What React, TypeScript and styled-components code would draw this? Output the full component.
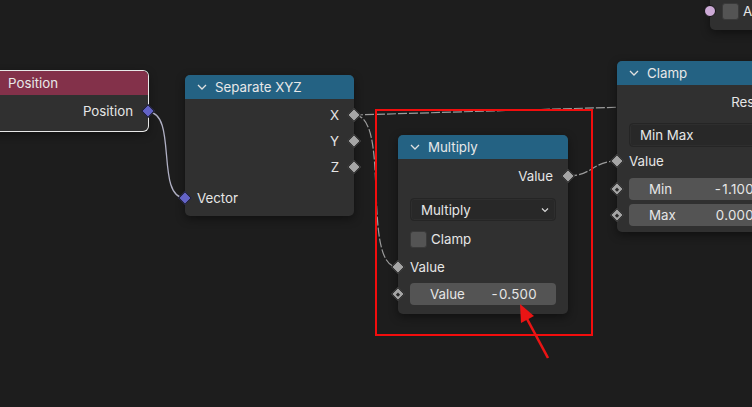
import React from "react";
import styled, { createGlobalStyle, css } from "styled-components";

const Global = createGlobalStyle`
  html, body { margin: 0; padding: 0; background: #1d1d1d; }
  body { font-family: Inter, "Noto Sans", "DejaVu Sans", sans-serif; overflow: hidden; }
`;

const Canvas = styled.div`
  position: relative;
  width: 752px;
  height: 407px;
  overflow: hidden;
  background: #1d1d1d;
`;

const Layer = styled.svg`
  position: absolute;
  left: 0;
  top: 0;
  pointer-events: none;
`;

const NodeBox = styled.div<{ $x: number; $y: number; $w: number; $selected?: boolean }>`
  position: absolute;
  left: ${(p) => p.$x}px;
  top: ${(p) => p.$y}px;
  width: ${(p) => p.$w}px;
  background: #303030;
  border-radius: 5px;
  box-shadow: ${(p) =>
    p.$selected
      ? "0 0 0 1px #e8e8e8, 0 3px 10px rgba(0,0,0,0.45)"
      : "0 3px 10px rgba(0,0,0,0.45)"};
  display: flex;
  flex-direction: column;
  color: #e6e6e6;
  font-size: 13.3px;
`;

const Header = styled.div<{ $color: string }>`
  height: 24px;
  background: ${(p) => p.$color};
  border-radius: 5px 5px 0 0;
  display: flex;
  align-items: center;
  gap: 8px;
  padding-left: 12px;
  color: #e8e8e8;
  white-space: nowrap;
`;

const Body = styled.div<{ $pt: number; $pb: number }>`
  display: flex;
  flex-direction: column;
  padding: ${(p) => p.$pt}px 0 ${(p) => p.$pb}px 0;
`;

const Row = styled.div<{ $h: number; $mt?: number; $out?: boolean }>`
  position: relative;
  height: ${(p) => p.$h}px;
  margin-top: ${(p) => p.$mt ?? 0}px;
  display: flex;
  align-items: center;
  justify-content: ${(p) => (p.$out ? "flex-end" : "flex-start")};
  padding: ${(p) => (p.$out ? "0 15px 0 0" : "0 0 0 12px")};
  white-space: nowrap;
`;

const Socket = styled.span<{ $side: "left" | "right"; $color?: string; $dot?: boolean }>`
  position: absolute;
  top: 50%;
  ${(p) => (p.$side === "left" ? "left: -5px;" : "right: -5px;")}
  width: 10px;
  height: 10px;
  margin-top: -5px;
  background: ${(p) => p.$color ?? "#a5a5a5"};
  border: 0.5px solid #111;
  transform: rotate(45deg);
  box-sizing: border-box;
  ${(p) =>
    p.$dot &&
    css`
      &::after {
        content: "";
        position: absolute;
        left: 3px;
        top: 3px;
        width: 3px;
        height: 3px;
        background: #2a2a2a;
      }
    `}
`;

const RoundSocket = styled.span`
  position: absolute;
  left: -18px;
  top: 50%;
  margin-top: -6px;
  width: 12px;
  height: 12px;
  border-radius: 50%;
  background: #ccaad6;
  border: 0.5px solid #111;
  box-sizing: border-box;
`;

const Dropdown = styled.div<{ $mt: number; $h: number }>`
  margin: ${(p) => p.$mt}px 12px 0 12px;
  height: ${(p) => p.$h}px;
  background: #282828;
  border: 1px solid #252525;
  box-shadow: inset 0 0 0 1px #2e2e2e;
  border-radius: 4px;
  box-sizing: border-box;
  display: flex;
  align-items: center;
  justify-content: space-between;
  padding: 0 6px 0 10px;
  white-space: nowrap;
`;

const CheckRow = styled.div<{ $mt: number }>`
  margin: ${(p) => p.$mt}px 12px 0 12px;
  height: 20px;
  display: flex;
  align-items: center;
  gap: 4px;
  position: relative;
  white-space: nowrap;
`;

const CheckBox = styled.span`
  width: 17px;
  height: 17px;
  border-radius: 3px;
  background: #545454;
  box-sizing: border-box;
  border: 1px solid #3a3a3a;
`;

const Field = styled.div<{ $mt: number }>`
  position: relative;
  margin: ${(p) => p.$mt}px 12px 0 12px;
  height: 22px;
  background: #545454;
  border-radius: 4px;
  display: flex;
  align-items: center;
  justify-content: space-between;
  padding: 0 19px 0 20px;
  white-space: nowrap;
`;

const FieldSocket = styled(Socket)`
  left: -17px;
`;

const Num = styled.span`
  letter-spacing: 0.3px;
`;

const Minus = styled.span`
  margin-right: 1px;
`;

const Highlight = styled.div`
  position: absolute;
  left: 375px;
  top: 109px;
  width: 218px;
  height: 227px;
  border: 2px solid #f20d0d;
  box-sizing: border-box;
`;

const Chevron = () => (
  <svg width="10" height="10" viewBox="0 0 10 10">
    <polyline points="1,3 5,7 9,3" fill="none" stroke="#e0e0e0" strokeWidth="1.3" />
  </svg>
);

const SmallChevron = () => (
  <svg width="8" height="8" viewBox="0 0 8 8">
    <polyline points="1,2.5 4,5.5 7,2.5" fill="none" stroke="#d8d8d8" strokeWidth="1.2" />
  </svg>
);

const Value = ({ v }: { v: string }) =>
  v.startsWith("-") ? (
    <Num>
      <Minus>-</Minus>
      {v.slice(1)}
    </Num>
  ) : (
    <Num>{v}</Num>
  );

export default function App() {
  return (
    <Canvas>
      <Global />
      <Layer width={752} height={407}>
        <path d="M148 112 C 178 112, 155 198, 185 198" stroke="#b0b0c4" strokeWidth="1.3" fill="none" />
        <path d="M354 115 L 625 107" stroke="#9c9c9c" strokeWidth="1.2" fill="none" strokeDasharray="9 2" />
        <path d="M354 115 C 392 115, 360 267, 398 267" stroke="#9c9c9c" strokeWidth="1.2" fill="none" strokeDasharray="9 2" />
        <path d="M568 176 C 592 176, 593 161, 617 161" stroke="#9c9c9c" strokeWidth="1.2" fill="none" strokeDasharray="9 2" />
      </Layer>

      <NodeBox $x={-22} $y={71} $w={170} $selected>
        <Header $color="#83314a">
          <Chevron />
          Position
        </Header>
        <Body $pt={5} $pb={9}>
          <Row $h={22} $out>
            Position
            <Socket $side="right" $color="#6363c7" />
          </Row>
        </Body>
      </NodeBox>

      <NodeBox $x={185} $y={75} $w={169}>
        <Header $color="#246283">
          <Chevron />
          Separate XYZ
        </Header>
        <Body $pt={3} $pb={5}>
          <Row $h={26} $out>
            X
            <Socket $side="right" />
          </Row>
          <Row $h={26} $out>
            Y
            <Socket $side="right" />
          </Row>
          <Row $h={26} $out>
            Z
            <Socket $side="right" />
          </Row>
          <Row $h={26} $mt={5}>
            <Socket $side="left" $color="#6363c7" />
            Vector
          </Row>
        </Body>
      </NodeBox>

      <NodeBox $x={398} $y={135} $w={170}>
        <Header $color="#246283">
          <Chevron />
          Multiply
        </Header>
        <Body $pt={6} $pb={9}>
          <Row $h={22} $out>
            Value
            <Socket $side="right" />
          </Row>
          <Dropdown $mt={11} $h={23}>
            Multiply
            <SmallChevron />
          </Dropdown>
          <CheckRow $mt={8}>
            <CheckBox />
            Clamp
          </CheckRow>
          <Row $h={20} $mt={8}>
            <Socket $side="left" />
            Value
          </Row>
          <Field $mt={6}>
            <FieldSocket $side="left" $dot />
            <span>Value</span>
            <Value v="-0.500" />
          </Field>
        </Body>
      </NodeBox>

      <NodeBox $x={617} $y={61} $w={168}>
        <Header $color="#246283">
          <Chevron />
          Clamp
        </Header>
        <Body $pt={5} $pb={6}>
          <Row $h={24} $out>
            Result
            <Socket $side="right" />
          </Row>
          <Dropdown $mt={9} $h={24}>
            Min Max
            <SmallChevron />
          </Dropdown>
          <Row $h={20} $mt={4}>
            <Socket $side="left" />
            Value
          </Row>
          <Field $mt={7}>
            <FieldSocket $side="left" $dot />
            <span>Min</span>
            <Value v="-1.100" />
          </Field>
          <Field $mt={4}>
            <FieldSocket $side="left" $dot />
            <span>Max</span>
            <Value v="0.000" />
          </Field>
        </Body>
      </NodeBox>

      <NodeBox $x={710} $y={-10} $w={120}>
        <Body $pt={11} $pb={9}>
          <CheckRow $mt={0}>
            <RoundSocket />
            <CheckBox />
            Alpha
          </CheckRow>
        </Body>
      </NodeBox>

      <Highlight />
      <Layer width={752} height={407}>
        <line x1="548" y1="358" x2="526" y2="317" stroke="#ea1414" strokeWidth="2.6" />
        <polygon points="520,304 534,316 521,323" fill="#ea1414" />
      </Layer>
    </Canvas>
  );
}
